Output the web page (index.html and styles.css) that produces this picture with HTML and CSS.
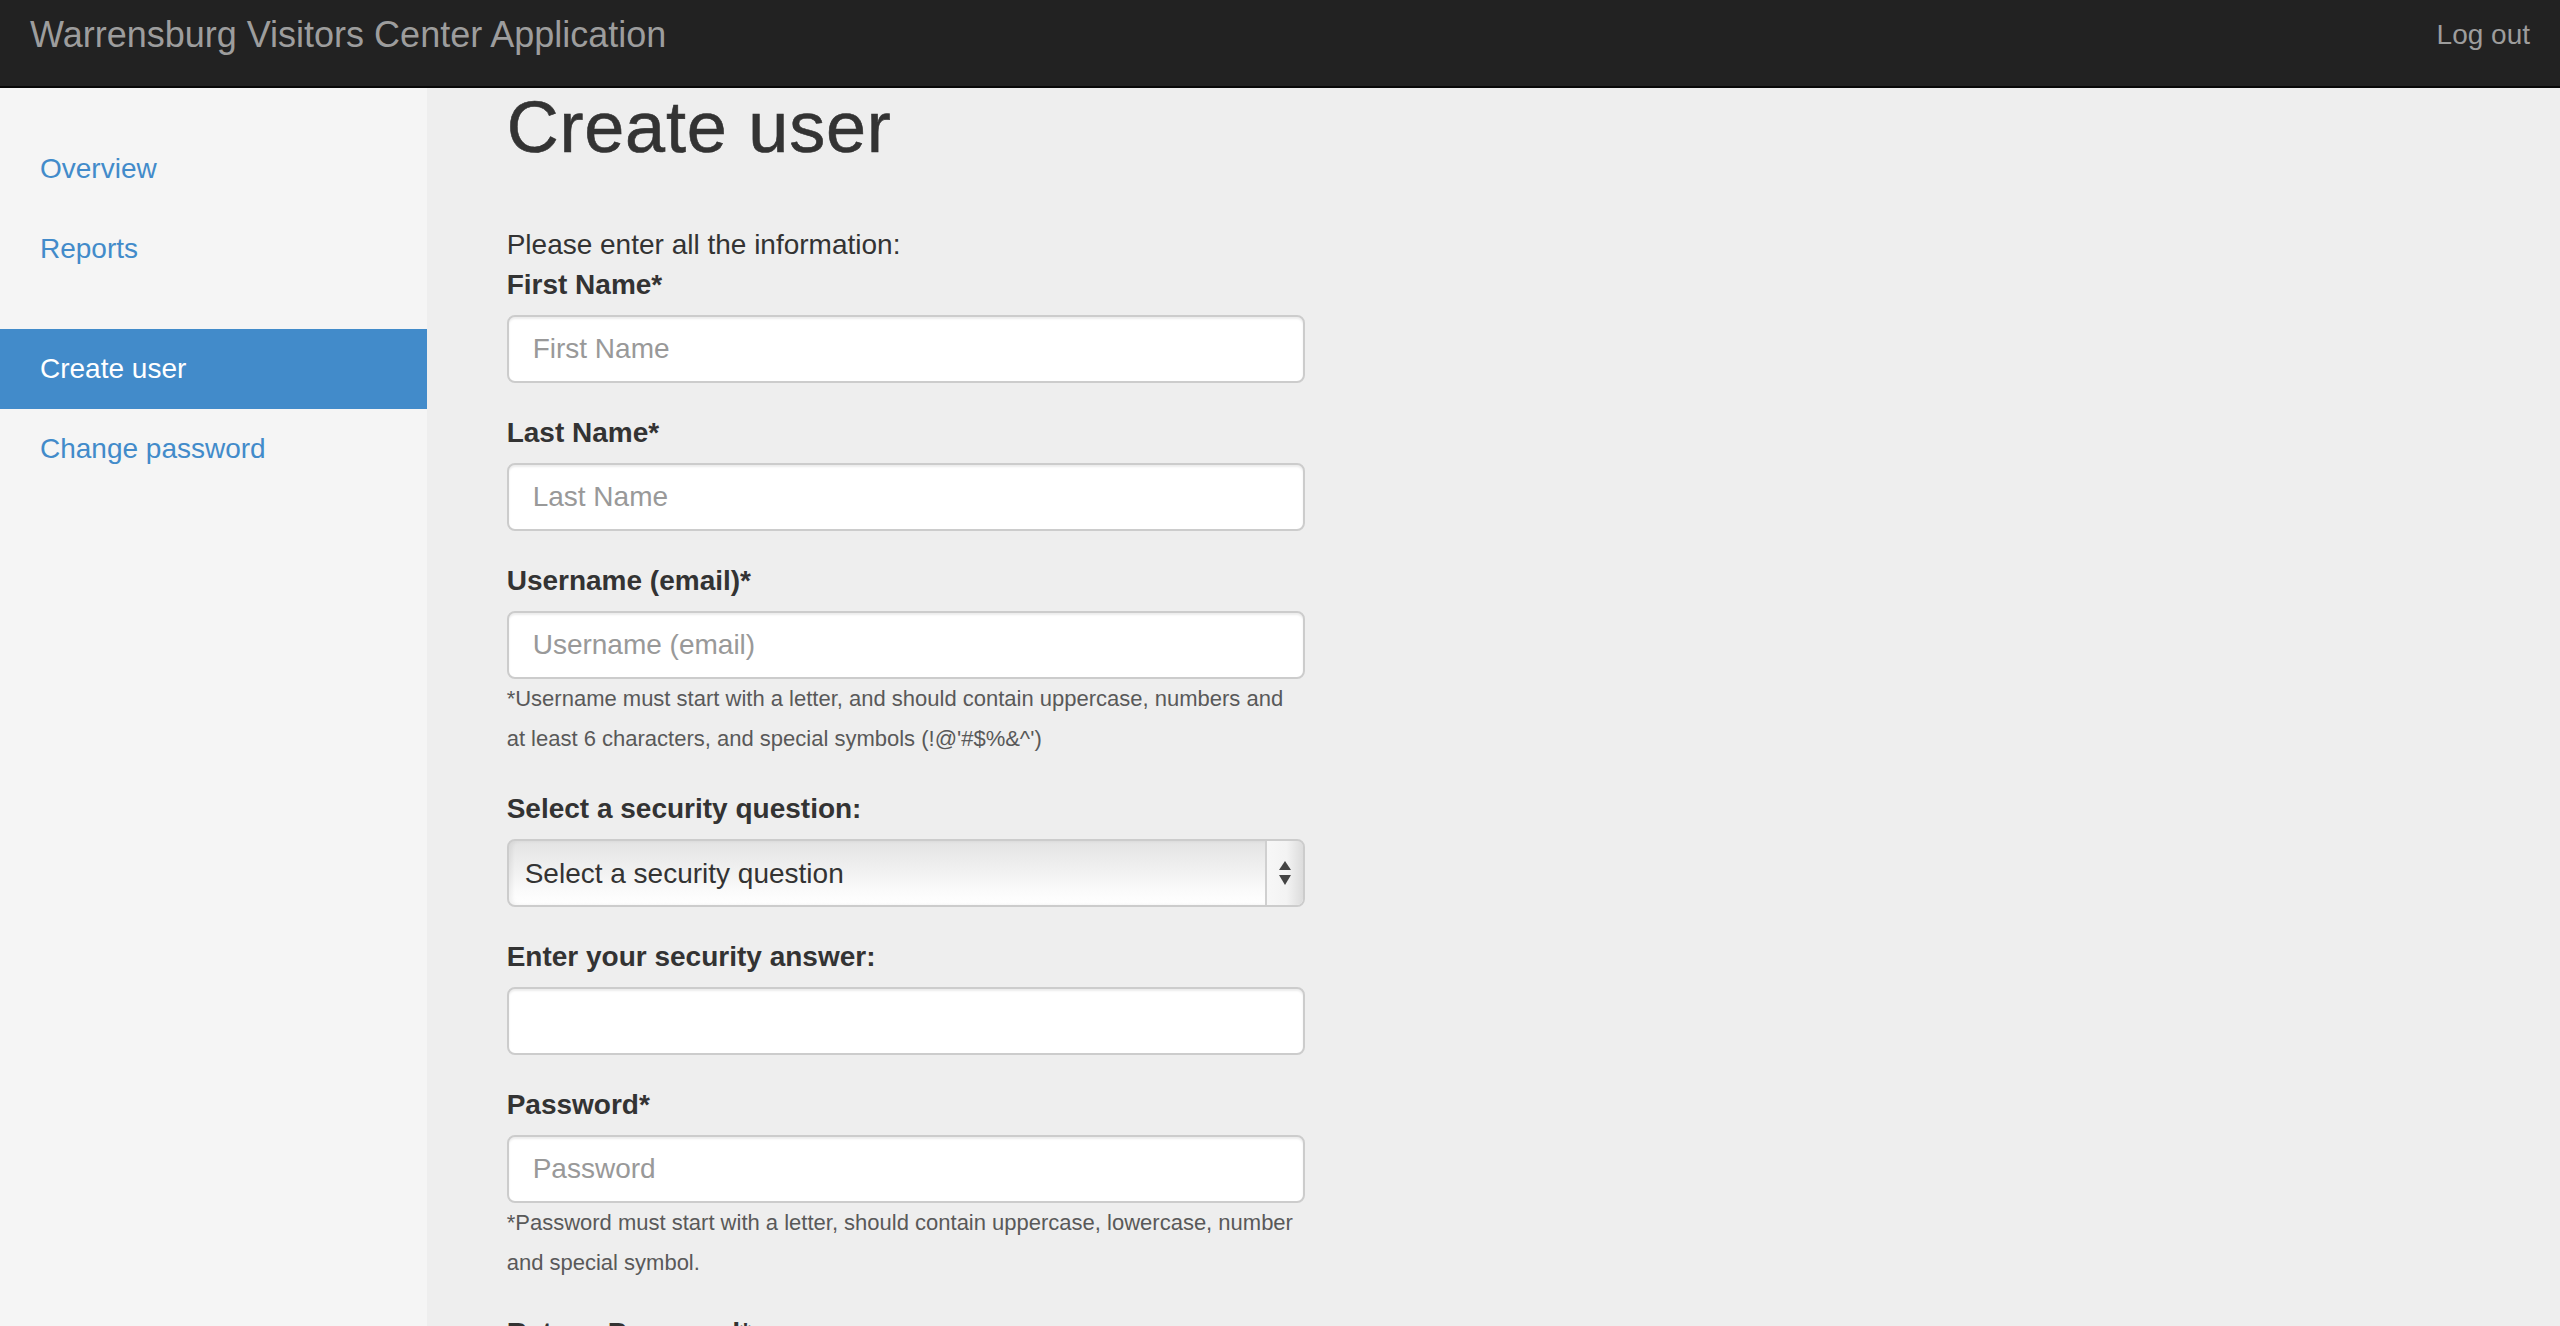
FILE: index.html
```html
<!DOCTYPE html>
<html lang="en">
<head>
<meta charset="utf-8">
<title>Create user - Warrensburg Visitors Center Application</title>
<link rel="stylesheet" href="styles.css">
</head>
<body>
<header class="navbar">
  <a class="brand" href="#">Warrensburg Visitors Center Application</a>
  <a class="logout" href="#">Log out</a>
</header>
<div class="layout">
  <nav class="sidebar">
    <ul class="nav-group">
      <li><a href="#">Overview</a></li>
      <li><a href="#">Reports</a></li>
    </ul>
    <ul class="nav-group">
      <li class="active"><a href="#">Create user</a></li>
      <li><a href="#">Change password</a></li>
    </ul>
  </nav>
  <main class="main">
    <h1 class="page-title">Create user</h1>
    <form class="user-form">
      <p class="intro">Please enter all the information:</p>
      <div class="form-group">
        <label for="first">First Name*</label>
        <input id="first" class="form-control" type="text" placeholder="First Name">
      </div>
      <div class="form-group">
        <label for="last">Last Name*</label>
        <input id="last" class="form-control" type="text" placeholder="Last Name">
      </div>
      <div class="form-group">
        <label for="user">Username (email)*</label>
        <input id="user" class="form-control" type="text" placeholder="Username (email)">
        <p class="help">*Username must start with a letter, and should contain uppercase, numbers and at least 6 characters, and special symbols (!@'#$%&amp;^')</p>
      </div>
      <div class="form-group">
        <label for="question">Select a security question:</label>
        <div class="select-wrap">
          <select id="question" class="select-control">
            <option>Select a security question</option>
            <option>What was the name of your first pet?</option>
            <option>What city were you born in?</option>
          </select>
          <span class="select-arrows">
            <svg width="12" height="24" viewBox="0 0 12 24"><polygon points="6,0 12,9 0,9" fill="#444"/><polygon points="0,14 12,14 6,24" fill="#444"/></svg>
          </span>
        </div>
      </div>
      <div class="form-group">
        <label for="answer">Enter your security answer:</label>
        <input id="answer" class="form-control" type="text">
      </div>
      <div class="form-group">
        <label for="pass">Password*</label>
        <input id="pass" class="form-control" type="password" placeholder="Password">
        <p class="help">*Password must start with a letter, should contain uppercase, lowercase, number and special symbol.</p>
      </div>
      <div class="form-group">
        <label for="pass2">Retype Password*</label>
        <input id="pass2" class="form-control" type="password" placeholder="Retype Password">
      </div>
    </form>
  </main>
</div>
</body>
</html>
```
FILE: styles.css
```css
html, body {
  margin: 0;
  padding: 0;
  height: 100%;
}
body {
  background: #eeeeee;
  color: #333333;
  font-family: "Liberation Sans", Arial, Helvetica, sans-serif;
  font-size: 28px;
  line-height: 40px;
  overflow: hidden;
}

.navbar {
  height: 86px;
  background: #222222;
  border-bottom: 2px solid #080808;
  display: flex;
  justify-content: space-between;
  align-items: flex-start;
}
.brand {
  padding: 15px 30px 0;
  font-size: 36px;
  line-height: 40px;
  color: #9d9d9d;
  text-decoration: none;
}
.logout {
  padding: 15px 30px 0;
  font-size: 28px;
  line-height: 40px;
  color: #9d9d9d;
  text-decoration: none;
}

.layout {
  display: grid;
  grid-template-columns: 16.6667% 1fr;
  height: calc(100vh - 88px);
  overflow: hidden;
}

.sidebar {
  background: #f5f5f5;
  padding-top: 41px;
}
.nav-group {
  list-style: none;
  margin: 0 0 40px;
  padding: 0;
}
.nav-group a {
  display: block;
  padding: 20px 40px;
  line-height: 40px;
  font-size: 28px;
  color: #428bca;
  text-decoration: none;
}
.nav-group .active a {
  background: #428bca;
  color: #ffffff;
}

.main {
  padding: 0 80px;
}
.page-title {
  margin: 0 0 58px;
  font-size: 72px;
  line-height: 1.1;
  font-weight: normal;
  letter-spacing: 0.8px;
  -webkit-text-stroke: 0.6px #333333;
  color: #333333;
}
.intro {
  margin: 0;
}
.form-group {
  margin-bottom: 30px;
}
.form-group label {
  display: block;
  font-weight: bold;
  margin-bottom: 10px;
  line-height: 40px;
}
.form-control {
  display: block;
  box-sizing: border-box;
  width: 798px;
  height: 68px;
  padding: 12px 24px;
  margin: 0;
  font-family: inherit;
  font-size: 28px;
  line-height: 40px;
  color: #555555;
  background: #ffffff;
  border: 2px solid #cccccc;
  border-radius: 8px;
  box-shadow: inset 0 2px 2px rgba(0, 0, 0, 0.075);
  outline: none;
}
.form-control::placeholder {
  color: #999999;
  opacity: 1;
}
.help {
  margin: 0;
  max-width: 790px;
  font-size: 22px;
  line-height: 40px;
  color: #595959;
}

.select-wrap {
  position: relative;
  width: 798px;
  height: 68px;
}
.select-control {
  -webkit-appearance: none;
  appearance: none;
  box-sizing: border-box;
  width: 100%;
  height: 68px;
  margin: 0;
  padding: 0 50px 0 16px;
  font-family: inherit;
  font-size: 28px;
  color: #333333;
  border: 2px solid #cccccc;
  border-radius: 8px;
  background: linear-gradient(to bottom, #e3e3e3 0%, #efefef 40%, #fbfbfb 80%, #ffffff 100%);
  box-shadow: inset 3px 0 4px rgba(0, 0, 0, 0.06);
  outline: none;
}
.select-arrows {
  position: absolute;
  top: 2px;
  right: 2px;
  bottom: 2px;
  width: 36px;
  border-left: 2px solid #d0d0d0;
  border-radius: 0 6px 6px 0;
  background: linear-gradient(to right, #f7f7f7 0%, #f3f3f3 55%, #dcdcdc 100%);
  display: flex;
  align-items: center;
  justify-content: center;
  pointer-events: none;
}
```
